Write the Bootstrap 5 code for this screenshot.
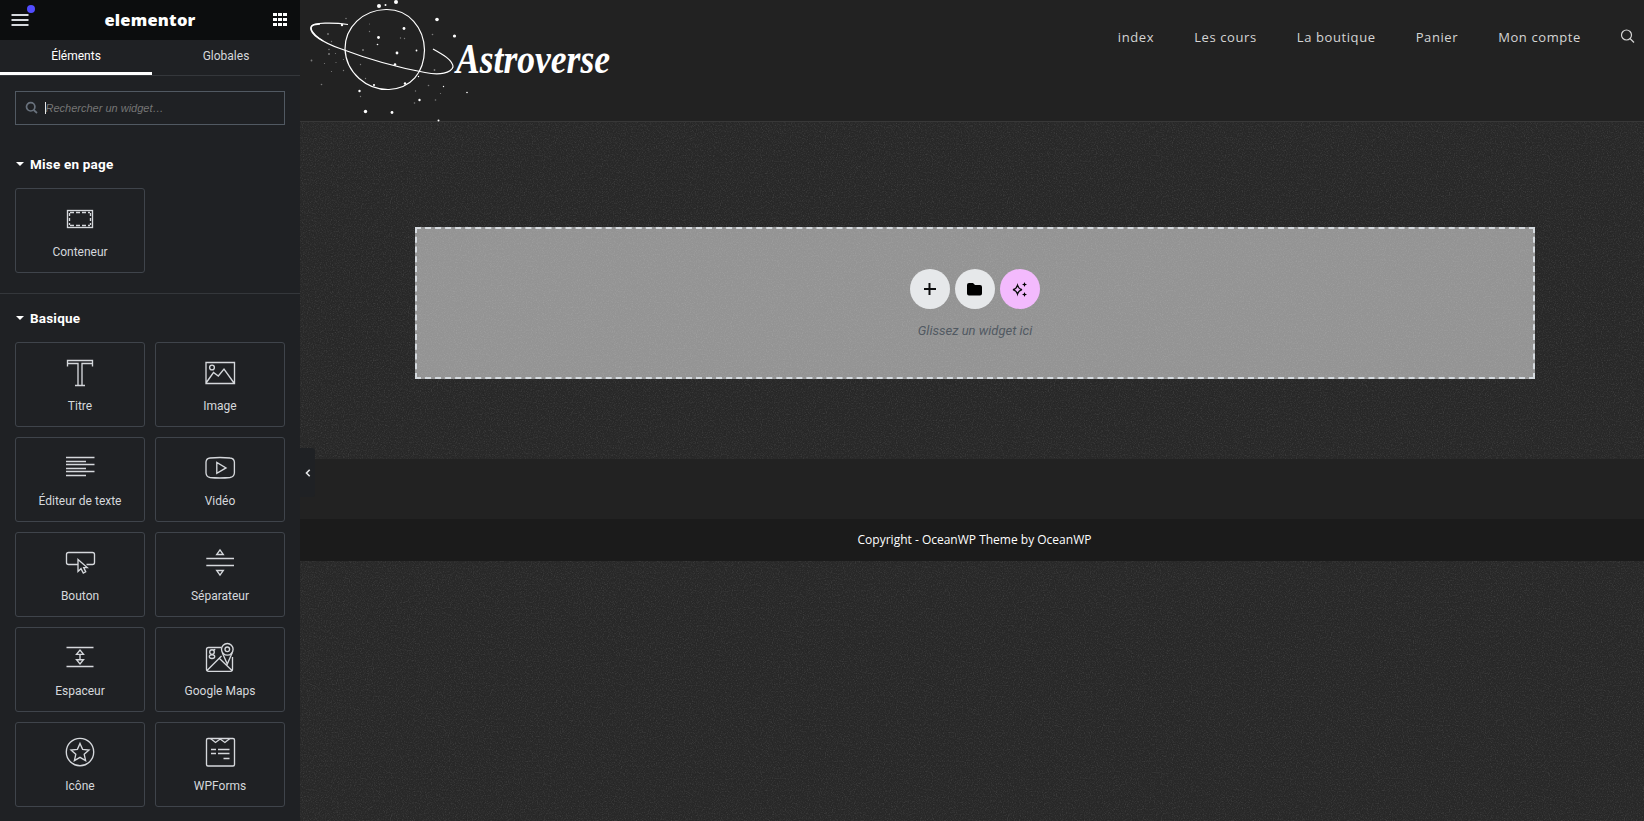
<!DOCTYPE html>
<html lang="fr">
<head>
<meta charset="utf-8">
<meta name="viewport" content="width=device-width, initial-scale=1">
<title>Elementor</title>
<link href="https://cdn.jsdelivr.net/npm/bootstrap@5.3.0/dist/css/bootstrap.min.css" rel="stylesheet">
<style>
body{font-family:Roboto,sans-serif;background:#2a2a2a;color:#d5d8dc;font-size:12px;line-height:1}
svg{display:block;overflow:visible}
.panel{width:300px;background:#1f2124;z-index:2}
.panel-head{height:40px;background:#0c0d0e;padding:0 13px 0 12px}
.dot{left:27px;top:5px;width:8px;height:8px;border-radius:50%;background:#524cff}
.brand-word{font:800 16.5px "Open Sans",sans-serif;letter-spacing:.2px;color:#fff;margin:0 0 1px -2px}
.tabs{height:36px;border-bottom:1px solid #34373b}
.tabs a{color:#d5d8dc;text-decoration:none;padding-top:10px;width:148px}
.tabs a.active{color:#fff;border-bottom:3px solid #fff;width:152px}
.search{height:34px;margin:15px 15px 0;border:1px solid #515962;padding-left:10px}
.search input{font:italic 11px "Liberation Sans",Arial,sans-serif;background:transparent;border:0;outline:0;color:#fff;width:200px;padding:0;margin-left:-.5px}
.search input::placeholder{color:#757575}
.caret{width:1px;height:12px;background:#e6e6e6;margin-left:7px}
.cat{font-weight:700;font-size:13.5px;letter-spacing:.2px;color:#fff;height:48px;padding:2px 0 0 16px;gap:6px}
.cat-first{margin-top:15px}
.caret-down{border:4px solid transparent;border-top:4px solid #fff;border-bottom:0;margin-top:-2px}
.widgets{display:grid;grid-template-columns:130px 130px;gap:10px;padding:0 15px}
.widget{height:85px;border:1px solid #3f444b;border-radius:3px;padding-top:14px;gap:11px}
.widget svg{width:32px;height:32px;fill:none;stroke:#d5d8dc;stroke-width:1.35;flex:none}
.sep{margin:20px 0 0;color:#34373b}
.preview{background:#2a2a2a}
.noise{inset:0;width:100%;height:100%}
.site-head{height:122px;background:#222;border-bottom:1px solid #383838}
.site-nav{font:13px "Open Sans",sans-serif;letter-spacing:.6px;padding:27px 9px 0 0;gap:40px}
.site-nav a{color:#d5d5d5;text-decoration:none;line-height:20px}
.drop{width:1120px;height:152px;margin:105px 109px 80px 115px;border:2px dashed #d5dadf;background:rgba(255,255,255,.5);padding-top:40px}
.drop .round{width:40px;height:40px;border-radius:50%;background:#e6e8ea}
.drop .ai{background:#f3bafd}
.drop .rounds{gap:5px}
.drop p{font-style:italic;font-size:13px;color:#515962;margin:15px 0 0}
.foot-w{height:60px;background:#222}
.foot-c{height:42px;background:#1b1b1b;color:#fff;font:12px "Open Sans",sans-serif;padding:0 0 2px 5px}
.toggle-p{left:300px;top:448px;width:15px;height:49px;background:#1f2124;border-radius:0 3px 3px 0;z-index:3}
</style>
</head>
<body class="vh-100 overflow-hidden">
<div class="d-flex vh-100 position-relative">
<aside class="panel flex-shrink-0 position-relative">
  <header class="panel-head d-flex align-items-center justify-content-between position-relative">
    <svg width="17" height="14"><path d="M-.5 2h17M-.5 7h17M-.5 12h17" stroke="#d5d8dc" stroke-width="2"/></svg>
    <span class="dot position-absolute"></span>
    <span class="brand-word">elementor</span>
    <svg width="14" height="14" fill="#fff"><path d="M0 0h4v3H0zM5 0h4v3H5zM10 0h4v3h-4zM0 5h4v3H0zM5 5h4v3H5zM10 5h4v3h-4zM0 10h4v3H0zM5 10h4v3H5zM10 10h4v3h-4z"/></svg>
  </header>
  <nav class="tabs d-flex text-center"><a class="active" href="#">Éléments</a><a href="#">Globales</a></nav>
  <div class="search d-flex align-items-center">
    <svg width="12" height="12" fill="none" stroke="#69727d" stroke-width="1.7"><circle cx="4.700" cy="4.800" r="4.200"/><path d="M7.700 8l3.300 3"/></svg>
    <span class="caret"></span><input placeholder="Rechercher un widget…">
  </div>
  <div class="cat cat-first d-flex align-items-center"><i class="caret-down"></i>Mise en page</div>
  <div class="widgets">
    <div class="widget d-flex flex-column align-items-center"><svg><rect x="3.500" y="7.500" width="25" height="17"/><path d="M6 9.500h20M6 22.500h20" stroke-dasharray="4 2"/><path d="M5.500 10v12M26.500 10v12" stroke-dasharray="3 2"/></svg>Conteneur</div>
  </div>
  <hr class="sep opacity-100">
  <div class="cat d-flex align-items-center"><i class="caret-down"></i>Basique</div>
  <div class="widgets">
    <div class="widget d-flex flex-column align-items-center"><svg><path d="M3.500 9.500v-6h25v6M3.500 6.500h10.500v22M28.500 6.500H18v22M11 28.500h10"/></svg>Titre</div>
    <div class="widget d-flex flex-column align-items-center"><svg><path d="M2 5.500h28.500v21H2zM2 26l7.500-10.500 4.800 3.500 5.700-7 10 14"/><circle cx="8" cy="10.500" r="2.400"/></svg>Image</div>
    <div class="widget d-flex flex-column align-items-center"><svg><path d="M2 5.500h28.500M2 9.500h20M2 12.500h28.500M2 16.500h20M2 19.500h28.500M2 23.500h20"/></svg>Éditeur de texte</div>
    <div class="widget d-flex flex-column align-items-center"><svg><path d="M6 6q10-1 20 0 4 .3 4.400 4v11q-.4 4-4.400 4.500-10 1-20 0-3.600-.5-4-4.500V10Q2.400 6.300 6 6zM12.800 10.500v10.800L22 15.900z"/></svg>Vidéo</div>
    <div class="widget d-flex flex-column align-items-center"><svg><path d="M14 17.500H4.500q-2 0-2-2v-8q0-2 2-2h24q2 0 2 2v8q0 2-2 2h-6"/><path d="M14 12.500v12l3-2.800 2.300 4.300 2.400-1.200-2-4.200h3.500z"/></svg>Bouton</div>
    <div class="widget d-flex flex-column align-items-center"><svg><path d="M2.300 11.500H30M2.300 18.500H30M12.700 7.500h6.600L16 2.800zM12.700 23.500h6.600L16 28.100z"/></svg>Séparateur</div>
    <div class="widget d-flex flex-column align-items-center"><svg><path d="M2.500 5.500h27M2.500 24.500h27M12.500 12.300h7L16 8zM12.500 17.700h7L16 22zM16 12v6"/></svg>Espaceur</div>
    <div class="widget d-flex flex-column align-items-center"><svg><path d="M17 5.500H4.500q-2 0-2 2v19.800q0 2 2 2h22q2 0 2-2V15M3 28.500L17.500 14M15.500 16.500L28 28.500M18.200 10.500L23.300 22l5-11.500"/><circle cx="23.300" cy="7.300" r="5.800"/><circle cx="23.300" cy="7.300" r="2.300"/><circle cx="8" cy="10" r="2.300"/><ellipse cx="8" cy="14.600" rx="2.700" ry="1.900"/><path d="M9.500 8l1.800-.7"/></svg>Google Maps</div>
    <div class="widget d-flex flex-column align-items-center"><svg><circle cx="16" cy="15" r="13.700"/><path d="M16 6.500l2.600 5.800 6.400.7-4.800 4.300 1.400 6.300-5.600-3.300-5.600 3.300 1.400-6.300L7 13l6.400-.7z"/></svg>Icône</div>
    <div class="widget d-flex flex-column align-items-center"><svg><rect x="2.500" y="1.500" width="28" height="27.500" rx="1.500"/><path d="M6.500 1.500l5 4 4.700-3.500 4.700 3.500 5-4M7 12.500h5M14 12.500h11.500M7 16.500h5M14 16.500h11.500M19.500 21.500h6"/></svg>WPForms</div>
  </div>
</aside>
<div class="toggle-p position-absolute d-flex align-items-center justify-content-center"><svg width="6" height="8" fill="none" stroke="#e6e8ea" stroke-width="1.600"><path d="M4.700 .8L1.500 4l3.200 3.200"/></svg></div>
<main class="preview flex-grow-1 position-relative">
  <svg class="noise position-absolute"><filter id="grain" x="0" y="0" width="100%" height="100%" color-interpolation-filters="sRGB"><feTurbulence type="fractalNoise" baseFrequency=".83" numOctaves="3" seed="4"/><feColorMatrix values="1 1 0 0 -.5 1 1 0 0 -.5 1 1 0 0 -.5 0 0 0 0 1"/><feComponentTransfer><feFuncR type="table" tableValues=".145 .155 .165 .2 .235"/><feFuncG type="table" tableValues=".145 .155 .165 .2 .235"/><feFuncB type="table" tableValues=".145 .155 .165 .2 .235"/></feComponentTransfer></filter><rect width="100%" height="100%" filter="url(#grain)"/></svg>
  <div class="position-relative">
  <header class="site-head d-flex justify-content-between align-items-start">
    <svg width="320" height="121" viewBox="0 0 320 121" fill="none" stroke="#fff">
      <path d="M86 9.500C109 9 124 28 124.500 50 124 73 111 88 89 89.500 67 90 46 73 45 49 45 27 63 10 86 9.500z" stroke-width="1.200"/>
      <path d="M48 24.500C35 22.500 12 22 11 27c0 7 12 16 29 21.500C65 58 95 67 125 72.500c15 3 26 .5 28-5.500 0-7-11-13-20-18" stroke-width="1.200"/>
      <path d="M20 24C5 24 10 34 23 41" stroke-width="1.300"/>
      <g fill="#fff" stroke="none"><circle cx="79" cy="6" r="2"/><circle cx="96" cy="2" r="2"/><circle cx="85.500" cy="5" r="1"/><circle cx="137" cy="19.500" r="1.800"/><circle cx="154.500" cy="36" r="1.600"/><circle cx="104" cy="28.500" r="1.400"/><circle cx="78.500" cy="37.500" r="1.400"/><circle cx="77.500" cy="44.500" r=".8"/><circle cx="97" cy="53" r="1.400"/><circle cx="95" cy="64.500" r="1.300"/><circle cx="116.500" cy="50.500" r=".9"/><circle cx="42" cy="25" r="1.200"/><circle cx="105" cy="83.500" r="1.200"/><circle cx="74" cy="85" r="1.100"/><circle cx="59.500" cy="91" r="1.200"/><circle cx="65.500" cy="111.500" r="1.700"/><circle cx="92" cy="112.500" r="1.400"/><circle cx="119.500" cy="100" r="1.200"/><circle cx="138.500" cy="120.500" r="1"/><circle cx="118.500" cy="76.500" r=".7"/><circle cx="143.500" cy="86.500" r=".7"/><circle cx="167" cy="92.500" r=".8"/>
      <g opacity=".4"><circle cx="11.500" cy="60.500" r=".9"/><circle cx="28" cy="34" r=".9"/><circle cx="31.500" cy="41.500" r=".7"/><circle cx="29" cy="49.500" r=".8"/><circle cx="29" cy="54" r="1"/><circle cx="35.500" cy="53.500" r=".6"/><circle cx="24.500" cy="63.500" r=".6"/><circle cx="36" cy="62.500" r=".6"/><circle cx="31.500" cy="71.500" r=".6"/><circle cx="43.500" cy="70.500" r=".7"/><circle cx="43.500" cy="59.500" r=".6"/><circle cx="21.500" cy="84.500" r=".8"/><circle cx="60.500" cy="64.500" r=".7"/><circle cx="63" cy="50" r="1"/><circle cx="69.500" cy="31.500" r=".7"/><circle cx="69.500" cy="24" r=".5"/><circle cx="46" cy="18.500" r=".8"/><circle cx="100.500" cy="38" r=".7"/><circle cx="104.500" cy="38.500" r=".7"/><circle cx="132.500" cy="34.500" r=".8"/><circle cx="134.500" cy="70" r=".9"/><circle cx="128.500" cy="85.500" r=".8"/><circle cx="115.500" cy="91" r=".7"/><circle cx="135.500" cy="100" r=".8"/><circle cx="140.500" cy="93.500" r=".6"/><circle cx="114.500" cy="103" r=".8"/><circle cx="65.500" cy="78.500" r=".7"/><circle cx="60.500" cy="96.500" r=".7"/></g></g>
      <text x="156" y="73" font-family="Liberation Serif, serif" font-style="italic" font-weight="700" font-size="42" fill="#fff" stroke="none" textLength="154" lengthAdjust="spacingAndGlyphs">Astroverse</text>
    </svg>
    <nav class="site-nav d-flex"><a href="#">index</a><a href="#">Les cours</a><a href="#">La boutique</a><a href="#">Panier</a><a href="#">Mon compte</a><svg width="14" height="17" fill="none" stroke="#d5d5d5" stroke-width="1.200"><circle cx="5.500" cy="8" r="5"/><path d="M9 11.500l4 4"/></svg></nav>
  </header>
  <section class="drop d-flex flex-column align-items-center">
    <div class="rounds d-flex">
      <span class="round d-flex align-items-center justify-content-center"><svg width="12" height="12" stroke="#0c0d0e" stroke-width="2"><path d="M5.500 0v12M0 6h12"/></svg></span>
      <span class="round d-flex align-items-center justify-content-center"><svg width="16" height="14"><path d="M2 1h4l2 2h5q2 0 2 2v6.500q0 2-2 2H2q-2 0-2-2V3q0-2 2-2z"/></svg></span>
      <span class="round ai d-flex align-items-center justify-content-center"><svg width="16" height="16"><path d="M5.500 4.200Q6.500 7.800 10 8.700 6.500 9.600 5.500 13.200 4.500 9.600 1 8.700 4.500 7.800 5.500 4.200z" fill="none" stroke="#0c0d0e" stroke-width="1.200"/><path d="M12.500 1l.7 1.800 1.800.7-1.800.7-.7 1.800-.7-1.800-1.800-.7 1.800-.7zM12.500 11l.7 1.800 1.800.7-1.800.7-.7 1.800-.7-1.800-1.800-.7 1.800-.7z"/></svg></span>
    </div>
    <p>Glissez un widget ici</p>
  </section>
  <div class="foot-w"></div>
  <footer class="foot-c d-flex align-items-center justify-content-center">Copyright - OceanWP Theme by OceanWP</footer>
  </div>
</main>
</div>
<script src="https://cdn.jsdelivr.net/npm/bootstrap@5.3.0/dist/js/bootstrap.bundle.min.js"></script>
</body>
</html>
